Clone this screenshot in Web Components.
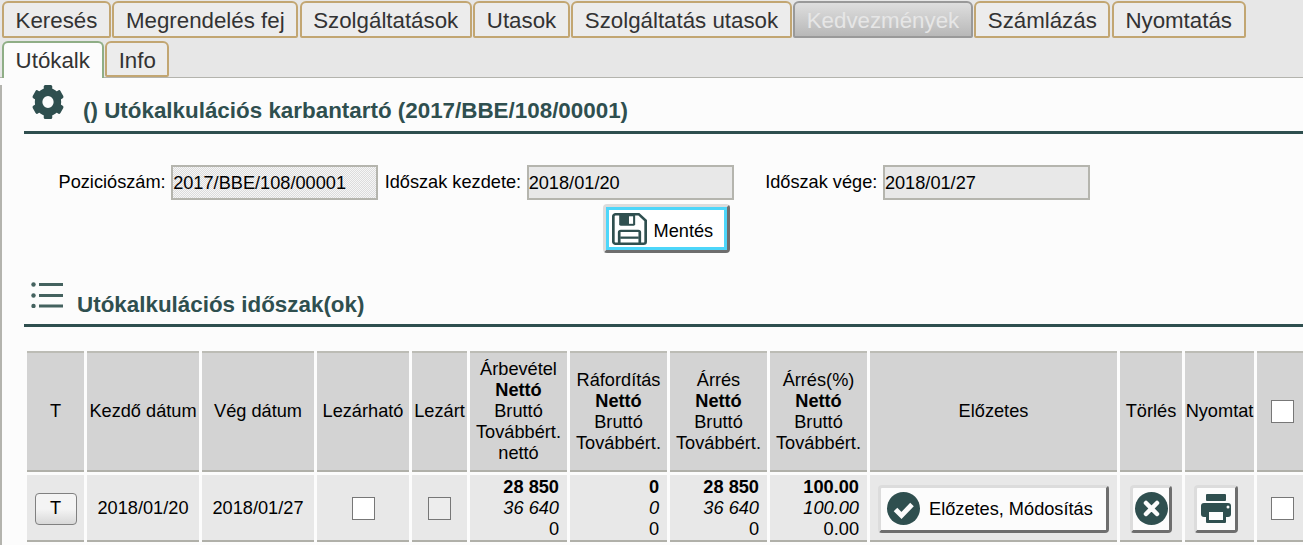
<!DOCTYPE html>
<html lang="hu"><head><meta charset="utf-8"><title>Utókalk</title>
<style>
html,body{margin:0;padding:0;background:#fcfcfc;height:545px;overflow:hidden}
body{font:18.2px/21px "Liberation Sans",Arial,sans-serif;color:#000}
</style></head>
<body>
<app-page>
  <tab-strip>
    <x-tab>Keresés</x-tab><x-tab>Megrendelés fej</x-tab><x-tab>Szolgáltatások</x-tab><x-tab>Utasok</x-tab><x-tab>Szolgáltatás utasok</x-tab><x-tab disabled>Kedvezmények</x-tab><x-tab>Számlázás</x-tab><x-tab>Nyomtatás</x-tab>
    <x-tab slot="second" active>Utókalk</x-tab><x-tab slot="second">Info</x-tab>
  </tab-strip>
  <main-panel>
    <x-title style="--top:7px;--icon-gap:19px;--pad:8px;--icon-up:4px;--pb:8px">
      <svg slot="icon" width="32" height="34" viewBox="0 0 34 34" preserveAspectRatio="none" fill="#2f4f4f"><circle cx="17" cy="17" r="10" fill="none" stroke="#2f4f4f" stroke-width="8"/><g><rect x="12.500" y="0" width="9" height="8" rx="1.500"/><rect x="12.500" y="26" width="9" height="8" rx="1.500"/><rect x="12.500" y="0" width="9" height="8" rx="1.500" transform="rotate(60 17 17)"/><rect x="12.500" y="26" width="9" height="8" rx="1.500" transform="rotate(60 17 17)"/><rect x="12.500" y="0" width="9" height="8" rx="1.500" transform="rotate(120 17 17)"/><rect x="12.500" y="26" width="9" height="8" rx="1.500" transform="rotate(120 17 17)"/></g></svg>
      () Utókalkulációs karbantartó (2017/BBE/108/00001)
    </x-title>
    <form-row>
      <x-field label="Poziciószám:" dotted>2017/BBE/108/00001</x-field>
      <x-field label="Időszak kezdete:">2018/01/20</x-field>
      <x-field label="Időszak vége:" style="margin-left:25px">2018/01/27</x-field>
    </form-row>
    <save-row>
      <x-btn focused style="--w:127px;--h:49px;--gap:7px;--pl:3px;--tp:5px">
        <svg slot="icon" width="35" height="32" viewBox="0 0 34 34" preserveAspectRatio="none"><path d="M3.500 1.300H26L32.700 8V30.500a2.200 2.200 0 0 1-2.200 2.200H3.500a2.200 2.200 0 0 1-2.200-2.200V3.500a2.200 2.200 0 0 1 2.200-2.200Z" fill="none" stroke="#2f4f4f" stroke-width="2.600"/><path d="M7 2H22.500V12a1.500 1.500 0 0 1-1.500 1.500H8.500A1.500 1.500 0 0 1 7 12Z" fill="#2f4f4f"/><rect x="16.500" y="3.500" width="4" height="8" fill="#fff"/><path d="M7 32V20.500A1.500 1.500 0 0 1 8.500 19H25.500A1.500 1.500 0 0 1 27 20.500V32" fill="none" stroke="#2f4f4f" stroke-width="2.600"/><rect x="8" y="25" width="18" height="2.400" fill="#2f4f4f"/></svg>
        Mentés
      </x-btn>
    </save-row>
    <x-title style="--top:29px;--icon-gap:13px;--pad:7px;--icon-up:9px;--pb:7px">
      <svg slot="icon" width="33" height="26" viewBox="0 0 33 26" fill="#44625f"><circle cx="2.500" cy="2.500" r="2.200"/><circle cx="2.500" cy="13.500" r="2.200"/><circle cx="2.500" cy="24" r="2.200"/><rect x="8" y="1" width="24" height="3"/><rect x="8" y="12" width="24" height="3"/><rect x="8" y="22.500" width="24" height="3"/></svg>
      Utókalkulációs időszak(ok)
    </x-title>
    <x-grid></x-grid>
  </main-panel>
</app-page>
<script>
function def(name, css, html){
  customElements.define(name, class extends HTMLElement{
    constructor(){super();const r=this.attachShadow({mode:'open'});r.innerHTML='<style>'+css+'</style>'+(typeof html==='function'?html(this):html);}
  });
}
def('app-page',':host{display:block;width:1303px;height:545px;overflow:hidden}','<slot></slot>');
def('tab-strip',`:host{display:block;background:#e7e7e7;border-bottom:1px solid #b4b4ae;height:77px;padding-left:2px}
 .r{display:flex;gap:1.400px;padding-top:1px;height:41px;box-sizing:border-box}
 .s{display:flex;gap:1.500px;height:37px;box-sizing:border-box}`,
 '<div class="r"><slot></slot></div><div class="s"><slot name="second"></slot></div>');
def('x-tab',`:host{display:block;box-sizing:border-box;height:37px;padding:0 11.600px;border:2px solid #c2a672;border-radius:6px 6px 2px 2px;background:#ececec;color:#333;font-size:22.300px;line-height:35px;white-space:nowrap}
 :host([active]){background:#fcfcfc;border-color:#8fae86;border-bottom:0;position:relative;z-index:1;border-radius:6px 6px 0 0}
 :host([slot=second]){height:36px}
 :host([active][slot=second]){height:37px}
 :host([disabled]){background:linear-gradient(#dedede,#b8b8b8);border-color:#999;color:#e6e6e6}`,'<slot></slot>');
def('main-panel',':host{display:block;border-left:2px solid #b4b4ae;padding-left:22px;height:467px;box-sizing:border-box;background:#fcfcfc}','<slot></slot>');
def('x-title',`:host{display:flex;align-items:flex-end;margin-top:var(--top,0);border-bottom:3px solid #2f4f4f;padding-left:var(--pad,7px);padding-bottom:var(--pb,7px);color:#2f4f4f;font-weight:bold;font-size:22.400px;line-height:24px;white-space:nowrap}
 .i{display:block;margin-right:var(--icon-gap,10px);margin-bottom:var(--icon-up,7px);line-height:0}
 .t{display:block}`,'<span class="i"><slot name="icon"></slot></span><span class="t"><slot></slot></span>');
def('form-row',':host{display:flex;gap:6.500px;margin-top:31px;padding-left:34.500px}','<slot></slot>');
def('x-field',`:host{display:flex;align-items:center;gap:5.500px;white-space:nowrap}
 .v{display:block;box-sizing:border-box;width:207px;height:35px;border:2px solid #b5b5ae;background:#e8e8e8;padding:0;line-height:32px;color:#000}
 :host([dotted]) .v{background:repeating-conic-gradient(#dcdcdc 0 25%,#f6f6f6 0 50%) 0 0/2px 2px}`,
 el=>'<span>'+el.getAttribute('label')+'</span><span class="v"><slot></slot></span>');
def('save-row',':host{display:flex;justify-content:center;margin-top:4px;padding-left:5px}','<slot></slot>');
def('x-btn',`:host{display:inline-flex;box-sizing:border-box;width:var(--w);height:var(--h,48px);border:3px solid;border-color:#dcdcdc #6e6e6e #6e6e6e #dcdcdc;border-radius:4px;background:#fcfcfc;vertical-align:middle}
 .b{flex:1;display:flex;align-items:center;gap:var(--gap,9px);padding-left:var(--pl,2px);white-space:nowrap;color:#000;box-sizing:border-box}
 .l{display:block;padding-top:var(--tp,2px)}
 :host([focused]) .b{border:3px solid #4dd6fa;background:#fff}
 ::slotted(svg){display:block;flex:none}`,'<span class="b"><slot name="icon"></slot><span class="l"><slot></slot></span></span>');
def('x-check',`:host{display:inline-block;box-sizing:border-box;width:23px;height:23px;border:1.500px solid #777;background:#fff;vertical-align:middle}
 :host([off]){background:#ededed}`,'');
const vals=(a,b,c)=>`<b>${a}</b><br><i>${b}</i><br>${c}`;
const head=(a)=>`${a}<br><b>Nettó</b><br>Bruttó<br>Továbbért.`;
def('x-grid',`:host{display:block;margin-top:21px;width:1290px}
 table{border-collapse:separate;border-spacing:3px;table-layout:fixed;width:1269px}
 td,th{padding:0;font-weight:normal;text-align:center;vertical-align:middle;white-space:nowrap;overflow:visible;border-top:2px solid #b5b5ae;border-bottom:2px solid #b0b0a9;box-sizing:border-box}
 th{background:#d3d3d3;height:121px;border-top-color:#bcbcb5}
 td{background:#e8e8e8;height:67px;border-top-color:#e8e8e8}
 td.n{text-align:right;padding-right:8px}
 .pr{margin-left:-8px}`,
`<table><colgroup><col style="width:57px"><col style="width:112px"><col style="width:112px"><col style="width:92px"><col style="width:55px"><col style="width:97px"><col style="width:97px"><col style="width:97px"><col style="width:97px"><col style="width:247px"><col style="width:62px"><col style="width:69px"><col style="width:50px"></colgroup>
<tr><th>T</th><th>Kezdő dátum</th><th>Vég dátum</th><th>Lezárható</th><th>Lezárt</th>
<th>Árbevétel<br><b>Nettó</b><br>Bruttó<br>Továbbért.<br>nettó</th><th>${head('Ráfordítás')}</th><th>${head('Árrés')}</th><th>${head('Árrés(%)')}</th>
<th>Előzetes</th><th>Törlés</th><th>Nyomtat</th><th><x-check></x-check></th></tr>
<tr><td><t-btn>T</t-btn></td><td>2018/01/20</td><td>2018/01/27</td><td><x-check></x-check></td><td><x-check off></x-check></td>
<td class="n">${vals('28 850','36 640','0')}</td><td class="n">${vals('0','0','0')}</td><td class="n">${vals('28 850','36 640','0')}</td><td class="n">${vals('100.00','100.00','0.00')}</td>
<td><x-btn style="--w:231px;--gap:9px;--pl:6px;--h:48px"><svg slot="icon" width="33" height="33" viewBox="0 0 33 33"><circle cx="16.500" cy="16.500" r="16.500" fill="#2f4f4f"/><path d="M8.500 17.500l6 6 10.500-11" fill="none" stroke="#fcfcfc" stroke-width="5"/></svg>Előzetes, Módosítás</x-btn></td>
<td><x-btn style="--w:42px;--pl:2px;--h:48px"><svg slot="icon" width="33" height="33" viewBox="0 0 33 33"><circle cx="16.500" cy="16.500" r="16.500" fill="#2f4f4f"/><path d="M11 11l11 11M22 11l-11 11" fill="none" stroke="#fcfcfc" stroke-width="4.500" stroke-linecap="round"/></svg></x-btn></td>
<td><x-btn class="pr" style="--w:44px;--pl:4px;--h:48px"><svg slot="icon" width="30" height="29" viewBox="0 0 30 29"><rect x="5" y="0" width="20" height="7" rx="1" fill="#2f4f4f"/><rect x="0" y="9" width="30" height="14" rx="3" fill="#2f4f4f"/><rect x="5" y="15" width="20" height="14" rx="1" fill="#2f4f4f"/><rect x="8" y="18" width="14" height="8" fill="#fcfcfc"/><circle cx="27" cy="13" r="1.500" fill="#fcfcfc"/></svg></x-btn></td>
<td><x-check></x-check></td></tr></table>`);
def('t-btn',`:host{display:inline-block;box-sizing:border-box;width:42px;height:32px;border:1.500px solid #808080;border-radius:4px;background:linear-gradient(#f4f4f4 50%,#d8d8d8);line-height:28px;text-align:center;vertical-align:middle}`,'<slot></slot>');
</script>
</body></html>
